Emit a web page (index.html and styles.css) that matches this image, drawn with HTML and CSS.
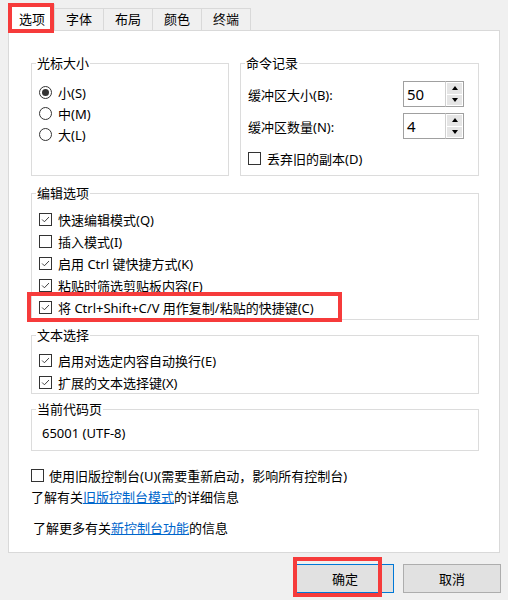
FILE: index.html
```html
<!DOCTYPE html>
<html lang="zh-CN">
<head>
<meta charset="utf-8">
<title>属性</title>
<link rel="stylesheet" href="styles.css">
</head>
<body>
<div class="window">
  <div class="tabs">
    <div class="tab active">选项</div>
    <div class="tab">字体</div>
    <div class="tab">布局</div>
    <div class="tab">颜色</div>
    <div class="tab">终端</div>
  </div>

  <div class="panel">
    <div class="top-row">
      <fieldset class="group cursor">
        <legend>光标大小</legend>
        <div class="opt"><span class="radio checked"></span>小(S)</div>
        <div class="opt"><span class="radio"></span>中(M)</div>
        <div class="opt"><span class="radio"></span>大(L)</div>
      </fieldset>

      <fieldset class="group history">
        <legend>命令记录</legend>
        <div class="field first">
          <span>缓冲区大小(B):</span>
          <div class="spin">
            <span class="num">50</span>
            <span class="arrows"><span class="arrow up"></span><span class="arrow down"></span></span>
          </div>
        </div>
        <div class="field">
          <span>缓冲区数量(N):</span>
          <div class="spin">
            <span class="num">4</span>
            <span class="arrows"><span class="arrow up"></span><span class="arrow down"></span></span>
          </div>
        </div>
        <div class="opt discard"><span class="check"></span>丢弃旧的副本(D)</div>
      </fieldset>
    </div>

    <fieldset class="group edit">
      <legend>编辑选项</legend>
      <div class="opt"><span class="check on"><svg viewBox="0 0 13 13"><path d="M2.5 6.5 L5.2 9.2 L10.6 3.6"/></svg></span>快速编辑模式(Q)</div>
      <div class="opt"><span class="check"></span>插入模式(I)</div>
      <div class="opt"><span class="check on"><svg viewBox="0 0 13 13"><path d="M2.5 6.5 L5.2 9.2 L10.6 3.6"/></svg></span>启用 Ctrl 键快捷方式(K)</div>
      <div class="opt"><span class="check on"><svg viewBox="0 0 13 13"><path d="M2.5 6.5 L5.2 9.2 L10.6 3.6"/></svg></span>粘贴时筛选剪贴板内容(F)</div>
      <div class="opt"><span class="check on"><svg viewBox="0 0 13 13"><path d="M2.5 6.5 L5.2 9.2 L10.6 3.6"/></svg></span>将 Ctrl+Shift+C/V 用作复制/粘贴的快捷键(C)</div>
    </fieldset>

    <fieldset class="group select">
      <legend>文本选择</legend>
      <div class="opt"><span class="check on"><svg viewBox="0 0 13 13"><path d="M2.5 6.5 L5.2 9.2 L10.6 3.6"/></svg></span>启用对选定内容自动换行(E)</div>
      <div class="opt"><span class="check on"><svg viewBox="0 0 13 13"><path d="M2.5 6.5 L5.2 9.2 L10.6 3.6"/></svg></span>扩展的文本选择键(X)</div>
    </fieldset>

    <fieldset class="group codepage">
      <legend>当前代码页</legend>
      <div class="cp">65001 (UTF-8)</div>
    </fieldset>

    <div class="opt legacy"><span class="check"></span>使用旧版控制台(U)(需要重新启动，影响所有控制台)</div>
    <div class="info">了解有关<a href="#">旧版控制台模式</a>的详细信息</div>
    <div class="info second">了解更多有关<a href="#">新控制台功能</a>的信息</div>
  </div>

  <div class="buttons">
    <button class="btn default">确定</button>
    <button class="btn">取消</button>
  </div>

  <div class="mark mark-tab"></div>
  <div class="mark mark-row"></div>
  <div class="mark mark-ok"></div>
</div>
</body>
</html>
```

FILE: styles.css
```css
* { box-sizing: border-box; }
html, body { margin: 0; padding: 0; }
body {
  background: #f0f0f0;
  font-family: "Noto Sans", "Noto Sans CJK SC", sans-serif;
  font-size: 13px;
  color: #000;
}
.window {
  position: relative;
  width: 508px;
  height: 600px;
}

/* tabs */
.tabs {
  display: flex;
  align-items: flex-end;
  height: 30px;
  padding-left: 9px;
}
.tab {
  height: 22px;
  line-height: 20px;
  padding: 0 11px;
  border: 1px solid #d9d9d9;
  border-bottom: none;
  margin-right: -1px;
  background: #f0f0f0;
  white-space: nowrap;
}
.tab.active {
  position: relative;
  z-index: 1;
  height: 27px;
  line-height: 28px;
  padding: 0 9px;
  margin-bottom: -1px;
  background: #fff;
}

/* panel */
.panel {
  margin: 0 8px;
  height: 523px;
  background: #fff;
  border: 1px solid #d9d9d9;
  padding: 23px 20px 0 22px;
}
.top-row {
  display: grid;
  grid-template-columns: 198px 1fr;
  column-gap: 11px;
}
.group {
  margin: 0;
  padding: 0 0 0 7px;
  border: 1px solid #dcdcdc;
  min-width: 0;
}
.group legend {
  margin-left: -3px;
  padding: 0 1px;
  line-height: 18px;
  height: 18px;
}
.cursor, .history { height: 122px; }
.cursor { padding-top: 10px; }

.opt {
  display: flex;
  align-items: center;
  height: 21px;
  white-space: nowrap;
}
.radio {
  width: 13px;
  height: 13px;
  border: 1px solid #333;
  border-radius: 50%;
  margin-right: 6px;
  display: flex;
  align-items: center;
  justify-content: center;
  flex: none;
}
.radio.checked::after {
  content: "";
  width: 7px;
  height: 7px;
  border-radius: 50%;
  background: #333;
}
.check {
  width: 13px;
  height: 13px;
  border: 1px solid #333;
  margin-right: 6px;
  flex: none;
  display: block;
}
.check svg {
  display: block;
  width: 11px;
  height: 11px;
}
.check svg path {
  fill: none;
  stroke: #333;
  stroke-width: 1.1;
}

/* history */
.history { padding-right: 14px; }
.field {
  display: flex;
  justify-content: space-between;
  align-items: center;
  height: 26px;
  margin-top: 6px;
  white-space: nowrap;
}
.field.first { margin-top: 9px; }
.spin {
  display: flex;
  height: 26px;
}
.num {
  width: 42px;
  height: 26px;
  border: 1px solid #a0a0a0;
  border-right: none;
  font-size: 15px;
  line-height: 24px;
  padding-left: 3px;
}
.arrows {
  width: 19px;
  height: 26px;
  border: 1px solid #a0a0a0;
  border-left: 1px solid #d0d0d0;
  display: flex;
  flex-direction: column;
  padding: 1px;
  gap: 1px;
}
.arrow {
  flex: 1;
  background: #e5e5e5;
  display: flex;
  align-items: center;
  justify-content: center;
}
.arrow::after {
  content: "";
  width: 0;
  height: 0;
  border-left: 3.5px solid transparent;
  border-right: 3.5px solid transparent;
}
.arrow.up::after { border-bottom: 4px solid #000; }
.arrow.down::after { border-top: 4px solid #000; }
.discard {
  height: 20px;
  margin-top: 9px;
}

/* edit */
.edit { margin-top: 8px; padding-top: 6px; padding-bottom: 1px; }
.edit .opt, .select .opt { height: 22px; }
.select { margin-top: 6px; padding-top: 5px; }
.codepage { margin-top: 6px; padding-top: 4px; padding-bottom: 6px; }
.cp { height: 22px; line-height: 22px; padding-left: 3px; }

.legacy { height: 22px; margin-top: 13px; }
.legacy .check { margin-right: 5px; }
.info { height: 22px; line-height: 22px; white-space: nowrap; }
.info.second { margin-top: 9px; margin-left: 2px; }
.info a { color: #0066cc; text-decoration: underline; }

/* buttons */
.buttons {
  display: flex;
  justify-content: flex-end;
  gap: 9px;
  margin-top: 11px;
  padding-right: 7px;
}
.btn {
  width: 98px;
  height: 29px;
  background: #e1e1e1;
  border: 1px solid #adadad;
  font-family: inherit;
  font-size: 13px;
  color: #000;
  padding: 0;
}
.btn.default { border-color: #0078d7; }

/* annotation overlays */
.mark {
  position: absolute;
  z-index: 5;
  border: 4px solid #f63b3b;
  pointer-events: none;
}
.mark-tab { left: 8px; top: 3px; width: 46px; height: 30px; }
.mark-row { left: 27px; top: 292px; width: 315px; height: 30px; }
.mark-ok { left: 293px; top: 557px; width: 89px; height: 40px; }
```
